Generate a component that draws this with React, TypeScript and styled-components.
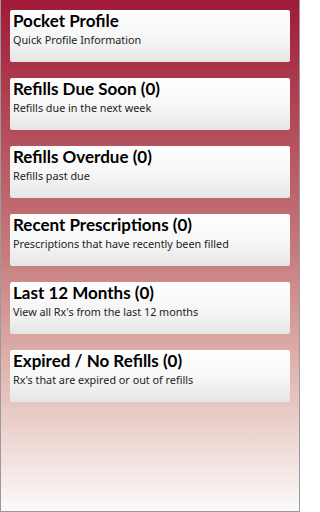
import React from "react";
import styled, { createGlobalStyle } from "styled-components";

const Global = createGlobalStyle`
  html, body { margin: 0; padding: 0; }
  body { font-family: "Lato", "Noto Sans", sans-serif; }
`;

const Screen = styled.div`
  box-sizing: border-box;
  width: 300px;
  height: 512px;
  border-left: 1px solid #9a9a9a;
  border-right: 1px solid #9a9a9a;
  border-bottom: 1px solid #9a9a9a;
  background: linear-gradient(to bottom, #a11a37 0%, #c67c7c 50%, #e6c4bd 78%, #fbfafa 100%);
  padding: 10px 9px 0 9px;
  display: flex;
  flex-direction: column;
  gap: 16px;
`;

const Card = styled.div`
  height: 52px;
  border-radius: 2px;
  background: linear-gradient(to bottom, #ffffff 0%, #f6f6f6 55%, #e6e6e6 100%);
  padding: 1px 3px 0 3px;
  box-sizing: border-box;
  display: flex;
  flex-direction: column;
`;

const Title = styled.div`
  font-family: "Lato", sans-serif;
  font-size: 17px;
  font-weight: 700;
  color: #000;
  line-height: 20px;
`;

const Sub = styled.div`
  font-family: "Noto Sans", sans-serif;
  font-size: 10.8px;
  color: #222;
  line-height: 17px;
`;

const items = [
  ["Pocket Profile", "Quick Profile Information"],
  ["Refills Due Soon (0)", "Refills due in the next week"],
  ["Refills Overdue (0)", "Refills past due"],
  ["Recent Prescriptions (0)", "Prescriptions that have recently been filled"],
  ["Last 12 Months (0)", "View all Rx's from the last 12 months"],
  ["Expired / No Refills (0)", "Rx's that are expired or out of refills"],
];

export default function App() {
  return (
    <>
      <Global />
      <Screen>
        {items.map(([t, s]) => (
          <Card key={t}>
            <Title>{t}</Title>
            <Sub>{s}</Sub>
          </Card>
        ))}
      </Screen>
    </>
  );
}
